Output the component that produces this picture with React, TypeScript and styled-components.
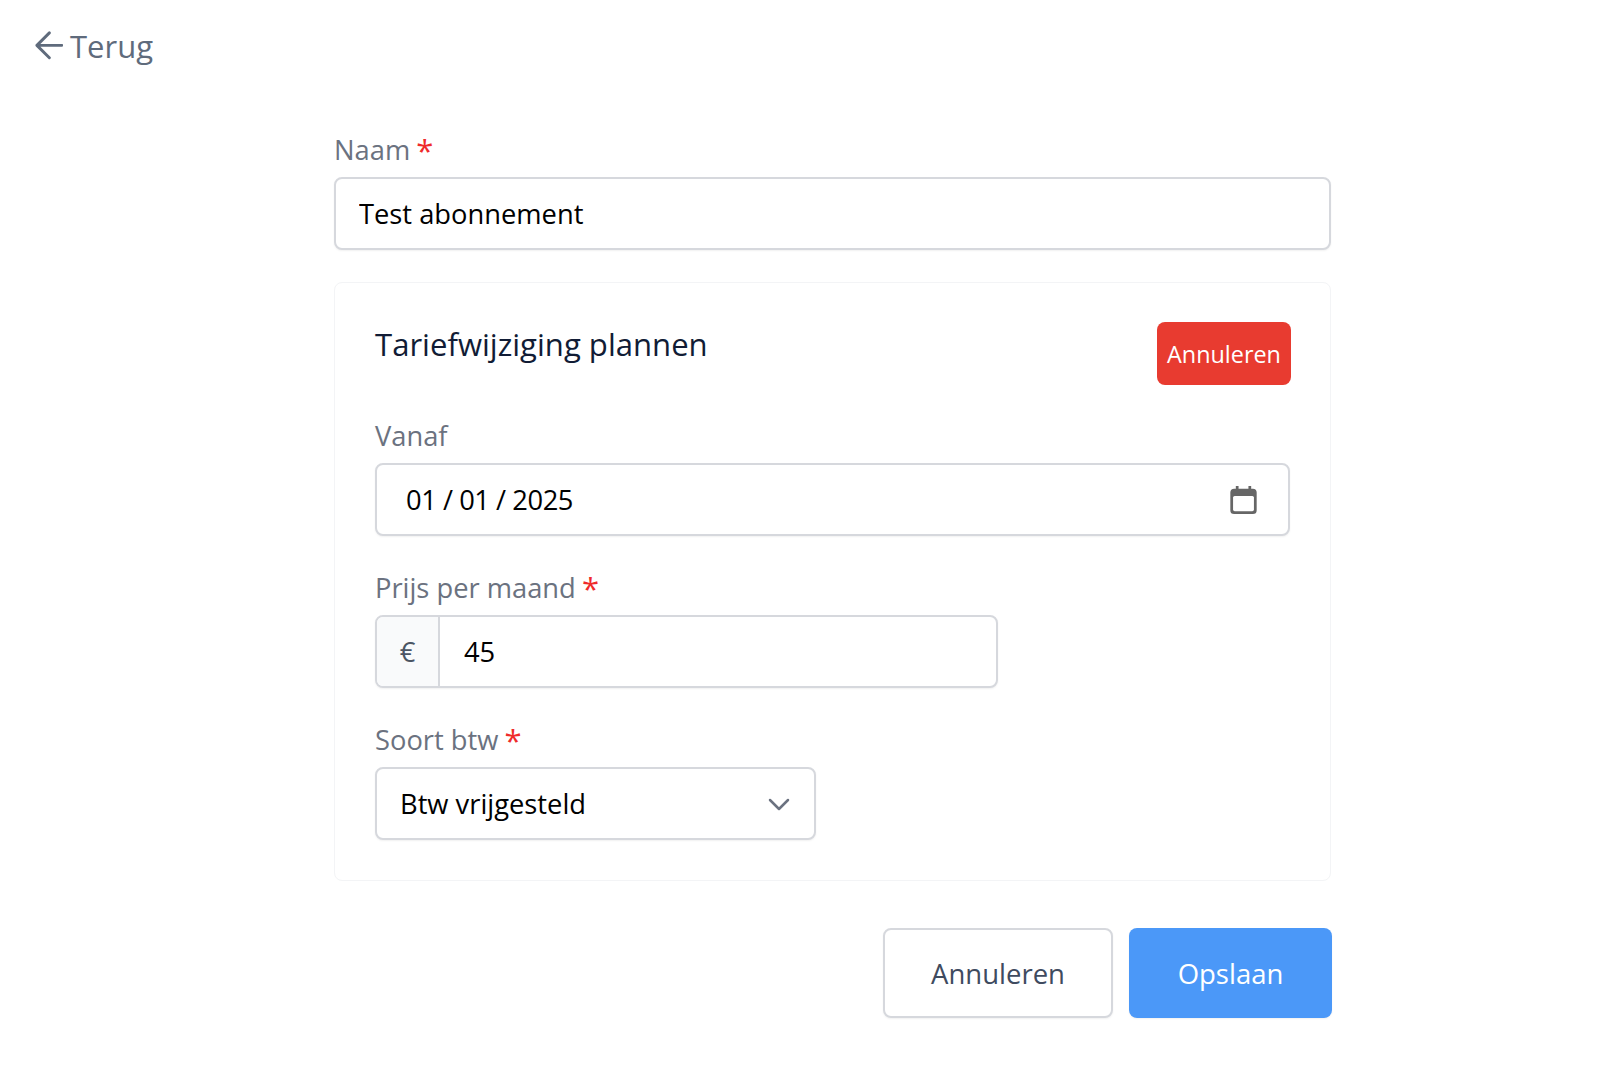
import React from "react";
import styled, { createGlobalStyle } from "styled-components";

const Global = createGlobalStyle`
  html, body { margin: 0; padding: 0; background: #fff; }
  body { font-family: "Open Sans", "Noto Sans", sans-serif; }
  * { box-sizing: border-box; }
`;

const Page = styled.div`
  width: 1600px;
  height: 1070px;
  overflow: hidden;
  padding-top: 24px;
`;

const BackLink = styled.a`
  display: flex;
  align-items: center;
  gap: 7px;
  height: 44px;
  margin-left: 33px;
  color: #5f6b7c;
  font-size: 31px;
  line-height: 44px;
  text-decoration: none;
`;

const Form = styled.form`
  display: flex;
  flex-direction: column;
  width: 998px;
  margin: 62px 0 0 334px;
`;

const Field = styled.div<{ $width: number; $top?: number }>`
  width: ${(p) => p.$width}px;
  margin-top: ${(p) => p.$top ?? 0}px;
`;

const Label = styled.label`
  display: block;
  height: 40px;
  margin-bottom: 7px;
  color: #6b7280;
  font-size: 27.3px;
  line-height: 40px;
`;

const Required = styled.span`
  margin-left: -1px;
  color: #ef2b2b;
  font-size: 31px;
  line-height: 30px;
  vertical-align: -2px;
`;

const Shell = styled.div`
  display: flex;
  align-items: stretch;
  height: 73px;
  overflow: hidden;
  background: #fff;
  border: 2px solid #d6d8dd;
  border-radius: 8px;
  box-shadow: 0 1px 2px rgba(0, 0, 0, 0.06);
`;

const Input = styled.input<{ $pad?: number; $tight?: boolean }>`
  flex: 1;
  min-width: 0;
  padding: 0 ${(p) => p.$pad ?? 24}px;
  border: 0;
  outline: 0;
  background: transparent;
  color: #000;
  font-family: inherit;
  font-size: 27.3px;
  letter-spacing: ${(p) => (p.$tight ? "-0.45px" : "0")};
`;

const Prefix = styled.span`
  display: flex;
  align-items: center;
  justify-content: center;
  width: 63px;
  background: #f9fafb;
  border-right: 2px solid #d6d8dd;
  color: #4b5563;
  font-size: 27.3px;
`;

const Trailing = styled.span<{ $right: number }>`
  display: flex;
  align-items: center;
  padding-right: ${(p) => p.$right}px;
`;

const Card = styled.section`
  width: 997px;
  margin-top: 32px;
  padding: 39px 39px 40px 40px;
  border: 1px solid #f3f4f6;
  border-radius: 8px;
`;

const CardHeader = styled.div`
  display: flex;
  justify-content: space-between;
  align-items: flex-start;
  margin-bottom: 31px;
`;

const CardTitle = styled.h2`
  margin: 2px 0 0;
  color: #111c35;
  font-size: 31.1px;
  font-weight: 400;
  line-height: 40px;
`;

const DangerButton = styled.button`
  width: 134px;
  height: 63px;
  padding: 0;
  border: 0;
  border-radius: 8px;
  background: #e83b30;
  color: #fff;
  font-family: inherit;
  font-size: 23.4px;
`;

const Footer = styled.div`
  display: flex;
  justify-content: flex-end;
  gap: 16px;
  margin-top: 47px;
`;

const FooterButton = styled.button<{ $primary?: boolean }>`
  width: ${(p) => (p.$primary ? 203 : 230)}px;
  height: 90px;
  padding: 0;
  border: ${(p) => (p.$primary ? "0" : "2px solid #d6d8dd")};
  border-radius: 8px;
  background: ${(p) => (p.$primary ? "#4b98f8" : "#fff")};
  box-shadow: 0 1px 2px rgba(0, 0, 0, 0.06);
  color: ${(p) => (p.$primary ? "#fff" : "#3f4b5f")};
  font-family: inherit;
  font-size: 27.5px;
`;

export default function App() {
  return (
    <Page>
      <Global />
      <BackLink href="#">
        <svg width="30" height="30" viewBox="0 0 30 30" fill="none" stroke="#5f6b7c" strokeWidth="3" strokeLinecap="round" strokeLinejoin="round">
          <path d="M16 3 3 16l13 13M3 16h26" transform="translate(1 -1) scale(.96)" />
        </svg>
        Terug
      </BackLink>
      <Form>
        <Field $width={997}>
          <Label>Naam <Required>*</Required></Label>
          <Shell><Input readOnly $pad={23} value="Test abonnement" /></Shell>
        </Field>
        <Card>
          <CardHeader>
            <CardTitle>Tariefwijziging plannen</CardTitle>
            <DangerButton type="button">Annuleren</DangerButton>
          </CardHeader>
          <Field $width={915}>
            <Label>Vanaf</Label>
            <Shell>
              <Input readOnly $pad={29} $tight value="01 / 01 / 2025" />
              <Trailing $right={31}>
                <svg width="27" height="28" viewBox="2 1.500 24 25.500" fill="none">
                  <path d="M7 1.500h2.500V4h9V1.500H21V4h1.500A3.500 3.500 0 0 1 26 7.500v16a3.500 3.500 0 0 1-3.500 3.500h-17A3.500 3.500 0 0 1 2 23.500v-16A3.500 3.500 0 0 1 5.500 4H7z" fill="#666" />
                  <rect x="4.500" y="10.500" width="19" height="14" rx="1.500" fill="#fff" />
                </svg>
              </Trailing>
            </Shell>
          </Field>
          <Field $width={623} $top={32}>
            <Label>Prijs per maand <Required>*</Required></Label>
            <Shell>
              <Prefix>€</Prefix>
              <Input readOnly value="45" />
            </Shell>
          </Field>
          <Field $width={441} $top={32}>
            <Label>Soort btw <Required>*</Required></Label>
            <Shell>
              <Input readOnly $pad={23} value="Btw vrijgesteld" />
              <Trailing $right={23}>
                <svg width="24" height="24" viewBox="0 0 24 24" fill="none" stroke="#6b7280" strokeWidth="2.500" strokeLinecap="round" strokeLinejoin="round">
                  <path d="m3 8 9 9 9-9" />
                </svg>
              </Trailing>
            </Shell>
          </Field>
        </Card>
        <Footer>
          <FooterButton type="button">Annuleren</FooterButton>
          <FooterButton type="button" $primary>Opslaan</FooterButton>
        </Footer>
      </Form>
    </Page>
  );
}
